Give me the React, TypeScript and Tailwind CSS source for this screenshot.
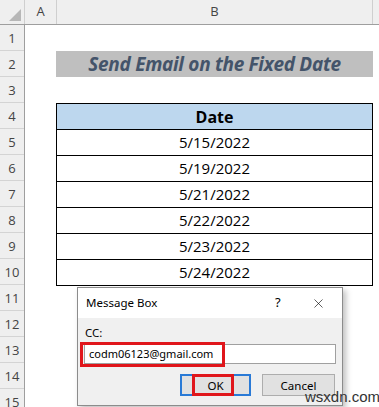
import { X } from 'lucide-react';

const dates = ['5/15/2022', '5/19/2022', '5/21/2022', '5/22/2022', '5/23/2022', '5/24/2022'];
const rows = Array.from({ length: 15 }, (_, i) => i + 1);

export default function App() {
    return (
        <div className="relative h-[407px] w-[379px] overflow-hidden bg-white font-['Open_Sans',sans-serif]">
            {/* column headers */}
            <div className="flex h-[25px] border-b border-[#9e9e9e] bg-[#efefef] text-[13px] text-[#444]">
                <div className="relative w-[25px] border-r border-[#cfcfcf]">
                    <div className="absolute bottom-[3px] right-[3px] h-0 w-0 border-b-[12px] border-l-[12px] border-b-[#b7b7b7] border-l-transparent" />
                </div>
                <div className="flex w-[32px] items-center justify-center border-r border-[#cfcfcf]">A</div>
                <div className="flex w-[316px] items-center justify-center border-r border-[#cfcfcf]">B</div>
                <div className="flex-1" />
            </div>

            <div className="flex">
                {/* row headers */}
                <div className="w-[25px] shrink-0 border-r border-[#9e9e9e] bg-[#efefef] text-[13px] text-[#444]">
                    {rows.map((r) => (
                        <div key={r} className="flex h-[26px] items-center justify-center border-b border-[#d4d4d4] pt-[2px]">
                            {r}
                        </div>
                    ))}
                </div>

                {/* sheet */}
                <div className="flex-1 pl-[31px]">
                    <div className="h-[26px]" />
                    <div className="flex h-[26px] w-[317px] items-center justify-center bg-[#bfbfbf] text-[19px] font-bold italic tracking-[-0.3px] text-[#44546a]">
                        Send Email on the Fixed Date
                    </div>
                    <div className="h-[26px]" />
                    <div className="w-[317px] border-t border-l border-r border-black">
                        <div className="flex h-[26px] items-center justify-center border-b border-black bg-[#bdd7ee] text-[16px] font-bold text-black">
                            Date
                        </div>
                        {dates.map((d) => (
                            <div key={d} className="flex h-[26px] items-center justify-center border-b border-black text-[15px] text-black">
                                {d}
                            </div>
                        ))}
                    </div>
                </div>
            </div>

            {/* dialog */}
            <div className="absolute left-[77px] top-[287px] w-[266px] border border-[#8c8c8c] bg-[#f0f0f0] font-['Noto_Sans',sans-serif] shadow-[3px_3px_6px_rgba(0,0,0,0.25)]">
                <div className="flex h-[30px] items-center bg-white pl-[8px] text-[11.5px] text-black">
                    <span className="flex-1">Message Box</span>
                    <span className="w-[20px] text-[13px]">?</span>
                    <X className="mx-[16px] h-[15px] w-[15px]" strokeWidth={1} />
                </div>
                <div className="px-[6px] pt-[6px] pb-[9px]">
                    <div className="pl-[1px] text-[11.5px] text-black">CC:</div>
                    <div className="relative mt-[3px]">
                        <div className="flex h-[20px] w-[252px] items-center border border-[#a0a0a0] bg-white pl-[4px] text-[11px] text-black">
                            codm06123@gmail.com
                        </div>
                        <div className="absolute -left-[4px] -top-[2px] h-[25px] w-[145px] border-[3px] border-[#e0161b]" />
                    </div>
                    <div className="mt-[10px] flex justify-end gap-[11px] pr-[1px]">
                        <div className="relative flex h-[22px] w-[71px] items-center justify-center border-2 border-[#2a7ad6] bg-[#e1e1e1] text-[11.5px] text-black">
                            OK
                            <div className="absolute left-[10px] -top-[2px] h-[22px] w-[42px] border-[3px] border-[#e0161b]" />
                        </div>
                        <div className="flex h-[22px] w-[73px] items-center justify-center border border-[#adadad] bg-[#e1e1e1] text-[11.5px] text-black">
                            Cancel
                        </div>
                    </div>
                </div>
            </div>

            <div className="absolute left-[305px] top-[388px] font-['Liberation_Sans',sans-serif] text-[15px] leading-[18px] text-[#333]">wsxdn.com</div>
        </div>
    );
}
